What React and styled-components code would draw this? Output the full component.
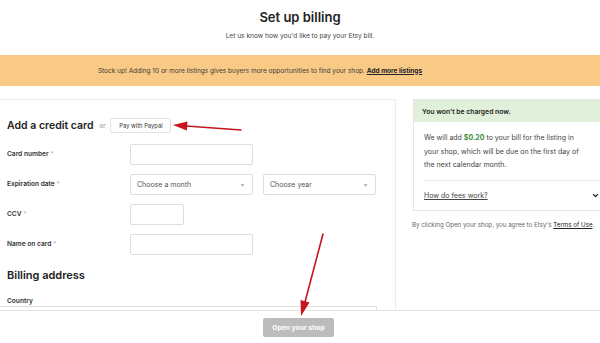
import styled, { createGlobalStyle } from 'styled-components';

const GlobalStyle = createGlobalStyle`
  * { box-sizing: border-box; }
  html, body { margin: 0; padding: 0; background: #fff; }
  body {
    font-family: Inter, 'Liberation Sans', sans-serif;
    color: #222;
  }
`;

function Arrows() {
  return (
    <Overlay viewBox='0 0 600 343' width='600' height='343'>
      <line x1='241' y1='130' x2='186' y2='126' stroke='#c4161c' strokeWidth='1.6' strokeLinecap='round' />
      <polygon points='173,125 187.5,121.5 186.8,130.5' fill='#c4161c' />
      <line x1='323' y1='234' x2='305' y2='302' stroke='#c4161c' strokeWidth='1.6' strokeLinecap='round' />
      <polygon points='301,316 309.5,302.5 300.5,300' fill='#c4161c' />
    </Overlay>
  );
}

function Field({ label, children }) {
  return (
    <>
      <Label>
        {label} <Req>*</Req>
      </Label>
      <Controls>{children}</Controls>
    </>
  );
}

function Select({ width, placeholder }) {
  return (
    <SelectBox $width={width}>
      <span>{placeholder}</span>
      <Caret>▾</Caret>
    </SelectBox>
  );
}

export default function App() {
  return (
    <Page>
      <GlobalStyle />
      <Content>
        <Header>
          <Title>Set up billing</Title>
          <Subtitle>Let us know how you'd like to pay your Etsy bill.</Subtitle>
        </Header>
        <Banner>
          Stock up! Adding 10 or more listings gives buyers more opportunities to find your shop.{' '}
          <BannerLink>Add more listings</BannerLink>
        </Banner>
        <Main>
          <FormCard>
            <CardHeading>
              <H2>Add a credit card</H2>
              <Or>or</Or>
              <PaypalButton type='button'>Pay with Paypal</PaypalButton>
            </CardHeading>
            <FormGrid>
              <Field label='Card number'>
                <Input $width={123} />
              </Field>
              <Field label='Expiration date'>
                <Select width={123} placeholder='Choose a month' />
                <Select width={113} placeholder='Choose year' />
              </Field>
              <Field label='CCV'>
                <Input $width={54} />
              </Field>
              <Field label='Name on card'>
                <Input $width={123} />
              </Field>
            </FormGrid>
            <SectionTitle>Billing address</SectionTitle>
            <CountryLabel>Country</CountryLabel>
            <CountrySelect />
          </FormCard>
          <Aside>
            <InfoPanel>
              <InfoHeader>You won't be charged now.</InfoHeader>
              <InfoBody>
                <InfoText>
                  <InfoCopy>
                    We will add <Price>$0.20</Price> to your bill for the listing in your shop, which will be due on the first day of the next calendar month.
                  </InfoCopy>
                </InfoText>
                <FeesRow>
                  <FeesLink>How do fees work?</FeesLink>
                  <Chevron viewBox='0 0 10 10' width='7' height='7'>
                    <path d='M1.5 3 L5 6.5 L8.5 3' fill='none' stroke='#222' strokeWidth='1.8' />
                  </Chevron>
                </FeesRow>
              </InfoBody>
            </InfoPanel>
            <Terms>
              By clicking Open your shop, you agree to Etsy's <TermsLink>Terms of Use</TermsLink>.
            </Terms>
          </Aside>
        </Main>
      </Content>
      <Footer>
        <OpenButton type='button'>Open your shop</OpenButton>
      </Footer>
      <Arrows />
    </Page>
  );
}

const Page = styled.div`
  position: relative;
  width: 600px;
  height: 343px;
  display: flex;
  flex-direction: column;
  overflow: hidden;
`;

const Content = styled.div`
  flex: 1;
  overflow: hidden;
`;

const Header = styled.div`
  display: flex;
  flex-direction: column;
  align-items: center;
  padding-top: 8px;
  height: 55px;
`;

const Title = styled.h1`
  margin: 0;
  font-size: 13px;
  font-weight: 600;
  line-height: 18px;
  color: #222;
`;

const Subtitle = styled.p`
  margin: 5px 0 0;
  font-size: 6.6px;
  line-height: 10px;
  color: #444;
`;

const Banner = styled.div`
  height: 31px;
  background: #f9c986;
  display: flex;
  align-items: center;
  justify-content: center;
  padding-right: 80px;
  font-size: 6.5px;
  color: #3a3a3a;
  white-space: pre;
`;

const BannerLink = styled.span`
  font-weight: 700;
  text-decoration: underline;
  color: #222;
`;

const Main = styled.div`
  display: flex;
  gap: 17px;
  margin-top: 13px;
`;

const FormCard = styled.section`
  width: 396px;
  flex-shrink: 0;
  height: 240px;
  border: 1px solid #ececec;
  border-left: none;
  padding: 18px 0 0 7px;
`;

const CardHeading = styled.div`
  display: flex;
  align-items: center;
  height: 15px;
`;

const H2 = styled.h2`
  margin: 0;
  font-size: 10.5px;
  font-weight: 600;
  color: #222;
`;

const Or = styled.span`
  font-size: 6px;
  color: #888;
  margin: 0 5px 0 6px;
`;

const PaypalButton = styled.button`
  height: 15px;
  width: 61px;
  padding: 0;
  border: 1px solid #e2e2e2;
  border-radius: 2px;
  background: #fff;
  font-family: inherit;
  font-size: 5.8px;
  color: #333;
`;

const FormGrid = styled.div`
  display: grid;
  grid-template-columns: 123px 1fr;
  row-gap: 9.5px;
  margin-top: 11px;
  align-items: center;
`;

const Label = styled.div`
  font-size: 6.6px;
  font-weight: 600;
  color: #333;
`;

const Req = styled.span`
  color: #bbb;
  font-weight: 400;
`;

const Controls = styled.div`
  display: flex;
  gap: 10px;
`;

const Input = styled.div`
  width: ${(p) => p.$width}px;
  height: 20.5px;
  border: 1px solid #dedede;
  border-radius: 2px;
  background: #fff;
`;

const SelectBox = styled.div`
  width: ${(p) => p.$width}px;
  height: 20.5px;
  border: 1px solid #dedede;
  border-radius: 2px;
  display: flex;
  align-items: center;
  justify-content: space-between;
  padding: 0 8px 0 6px;
  font-size: 7px;
  color: #555;
`;

const Caret = styled.span`
  font-size: 6px;
  color: #aaa;
`;

const SectionTitle = styled.h3`
  margin: 13px 0 0;
  font-size: 11px;
  font-weight: 600;
  line-height: 14px;
  color: #222;
`;

const CountryLabel = styled.div`
  margin-top: 15px;
  font-size: 6.6px;
  font-weight: 600;
  color: #333;
  line-height: 8px;
`;

const CountrySelect = styled.div`
  margin-top: 1px;
  width: 377px;
  height: 20px;
  border: 1px solid #dedede;
  border-left: none;
  margin-left: -7px;
`;

const Aside = styled.aside`
  width: 200px;
  flex-shrink: 0;
`;

const InfoPanel = styled.div`
  border: 1px solid #e6e6e6;
  border-right: none;
  height: 112px;
`;

const InfoHeader = styled.div`
  height: 22px;
  background: #e1f0da;
  display: flex;
  align-items: center;
  padding-left: 8px;
  font-size: 6.8px;
  font-weight: 600;
  color: #222;
`;

const InfoBody = styled.div`
  padding: 0 0 0 10px;
`;

const InfoText = styled.div`
  padding: 9px 0 8px 0;
  border-bottom: 1px solid #e8e8e8;
`;

const InfoCopy = styled.p`
  margin: 0;
  width: 160px;
  font-size: 7px;
  line-height: 13.5px;
  color: #444;
`;

const Price = styled.span`
  color: #3e8e3b;
  font-weight: 700;
`;

const FeesRow = styled.div`
  height: 29px;
  display: flex;
  align-items: center;
  justify-content: space-between;
  padding-right: 14px;
`;

const FeesLink = styled.span`
  font-size: 7px;
  color: #444;
  text-decoration: underline;
`;

const Chevron = styled.svg`
  display: block;
`;

const Terms = styled.p`
  margin: 10px 0 0 -1px;
  font-size: 6.2px;
  color: #666;
  white-space: nowrap;
`;

const TermsLink = styled.span`
  color: #222;
  text-decoration: underline;
`;

const Footer = styled.footer`
  height: 33px;
  flex-shrink: 0;
  border-top: 1px solid #e4e4e4;
  background: #fff;
  display: flex;
  justify-content: center;
  padding-top: 7px;
  padding-right: 3px;
`;

const OpenButton = styled.button`
  width: 71px;
  height: 19px;
  border: none;
  border-radius: 2px;
  background: #bcbcbc;
  color: #fff;
  font-family: inherit;
  font-size: 6.8px;
  font-weight: 700;
  padding: 0;
`;

const Overlay = styled.svg`
  position: absolute;
  left: 0;
  top: 0;
  pointer-events: none;
`;
